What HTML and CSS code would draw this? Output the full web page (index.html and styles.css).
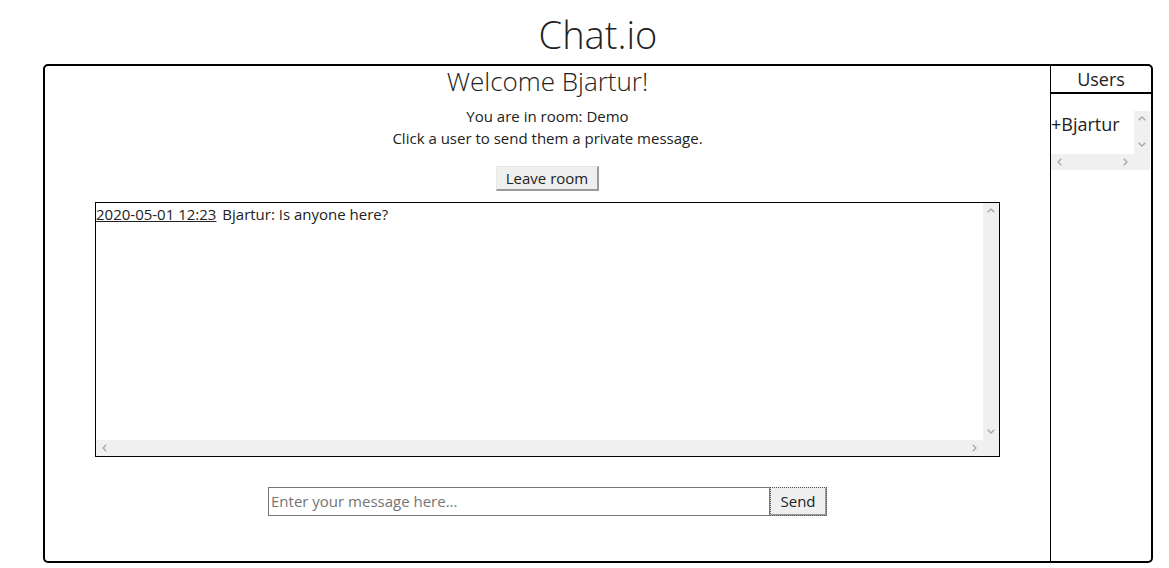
FILE: index.html
```html
<!DOCTYPE html>
<html>
<head>
<meta charset="utf-8">
<link rel="stylesheet" href="styles.css">
</head>
<body>
<div class="wrap">
  <h1 class="title">Chat.io</h1>
  <div class="frame">
    <main class="main">
      <h2 class="welcome">Welcome Bjartur!</h2>
      <p class="info">You are in room: Demo<br>Click a user to send them a private message.</p>
      <button class="leave">Leave room</button>
      <div class="panel messages">
        <div class="panel-body">
          <div class="msg"><a href="#" class="time">2020-05-01 12:23</a> Bjartur: Is anyone here?</div>
        </div>
        <div class="vbar">
          <svg class="arr" width="8" height="5" viewBox="0 0 8 5"><path d="M0.7 4.3 L4 1 L7.3 4.3" fill="none" stroke="#a6a6a6" stroke-width="1.3"/></svg>
          <svg class="arr" width="8" height="5" viewBox="0 0 8 5"><path d="M0.7 0.7 L4 4 L7.3 0.7" fill="none" stroke="#a6a6a6" stroke-width="1.3"/></svg>
        </div>
        <div class="hbar">
          <svg class="arr" width="5" height="8" viewBox="0 0 5 8"><path d="M4.3 0.7 L1 4 L4.3 7.3" fill="none" stroke="#a6a6a6" stroke-width="1.3"/></svg>
          <svg class="arr" width="5" height="8" viewBox="0 0 5 8"><path d="M0.7 0.7 L4 4 L0.7 7.3" fill="none" stroke="#a6a6a6" stroke-width="1.3"/></svg>
        </div>
        <div class="corner"></div>
      </div>
      <form class="composer">
        <input class="input" type="text" placeholder="Enter your message here...">
        <button class="send" type="button">Send</button>
      </form>
    </main>
    <aside class="users">
      <div class="users-head">Users</div>
      <div class="panel user-list">
        <div class="panel-body">
          <div class="user">+Bjartur</div>
        </div>
        <div class="vbar">
          <svg class="arr" width="8" height="5" viewBox="0 0 8 5"><path d="M0.7 4.3 L4 1 L7.3 4.3" fill="none" stroke="#a6a6a6" stroke-width="1.3"/></svg>
          <svg class="arr" width="8" height="5" viewBox="0 0 8 5"><path d="M0.7 0.7 L4 4 L7.3 0.7" fill="none" stroke="#a6a6a6" stroke-width="1.3"/></svg>
        </div>
        <div class="hbar">
          <svg class="arr" width="5" height="8" viewBox="0 0 5 8"><path d="M4.3 0.7 L1 4 L4.3 7.3" fill="none" stroke="#a6a6a6" stroke-width="1.3"/></svg>
          <svg class="arr" width="5" height="8" viewBox="0 0 5 8"><path d="M0.7 0.7 L4 4 L0.7 7.3" fill="none" stroke="#a6a6a6" stroke-width="1.3"/></svg>
        </div>
        <div class="corner"></div>
      </div>
    </aside>
  </div>
</div>
</body>
</html>
```
FILE: styles.css
```css
html, body {
  margin: 0;
  padding: 0;
  background: #fff;
}
body {
  font-family: "Open Sans", "Liberation Sans", sans-serif;
  color: #222;
}
.wrap {
  width: 1110px;
  margin-left: 43px;
  padding-top: 8px;
}
.title {
  margin: 0;
  text-align: center;
  font-weight: 300;
  font-size: 38px;
  line-height: 52px;
  height: 56px;
}
.frame {
  display: flex;
  height: 499px;
  box-sizing: border-box;
  border: 2px solid #000;
  border-radius: 5px;
}
.main {
  flex: 1;
  display: flex;
  flex-direction: column;
  align-items: center;
  border-right: 1px solid #000;
}
.welcome {
  margin: -1px 0 0;
  font-weight: 300;
  font-size: 26px;
  line-height: 32px;
}
.info {
  margin: 8px 0 0;
  font-size: 15px;
  line-height: 22px;
  text-align: center;
}
.leave {
  margin-top: 17px;
  font-family: inherit;
  font-size: 15px;
  color: #222;
  background: #efefef;
  border-style: solid;
  border-width: 1px 2px 2px 1px;
  border-color: #e6e6e6 #9a9a9a #9a9a9a #e6e6e6;
  padding: 0 9px;
  height: 25px;
  line-height: 21px;
}

/* scroll panels with classic scrollbars */
.panel {
  display: grid;
  grid-template-columns: 1fr 16px;
  grid-template-rows: 1fr 16px;
  box-sizing: border-box;
}
.panel-body {
  overflow: hidden;
}
.vbar {
  background: #f0f0f0;
  display: flex;
  flex-direction: column;
  justify-content: space-between;
  align-items: center;
  padding: 5px 0 7px;
}
.hbar {
  background: #f0f0f0;
  display: flex;
  justify-content: space-between;
  align-items: center;
  padding: 0 6px;
}
.corner {
  background: #f0f0f0;
}
.arr {
  display: block;
}

.messages {
  margin-top: 11px;
  width: 905px;
  height: 255px;
  border: 1px solid #000;
  font-size: 15px;
  line-height: 22px;
}
.messages .vbar {
  padding: 5px 0 6px;
}
.msg {
  white-space: nowrap;
}
.time {
  color: #222;
  text-decoration: underline;
  margin-right: 2px;
}
.composer {
  margin: 30px 0 0;
  display: flex;
}
.input {
  width: 502px;
  height: 29px;
  box-sizing: border-box;
  border: 1px solid #767676;
  font-family: inherit;
  font-size: 15px;
  padding: 0 2px 1px;
  color: #222;
}
.input::placeholder {
  color: #757575;
}
.send {
  height: 29px;
  width: 57px;
  box-sizing: border-box;
  font-family: inherit;
  font-size: 15px;
  color: #222;
  background: #efefef;
  border-style: solid;
  border-width: 1px 2px 2px 1px;
  border-color: #e6e6e6 #9a9a9a #9a9a9a #e6e6e6;
  outline: 1px dotted #555;
  outline-offset: -1px;
  padding: 0;
}
.users {
  width: 100px;
  display: flex;
  flex-direction: column;
}
.users-head {
  font-size: 18px;
  line-height: 26px;
  text-align: center;
  border-bottom: 2px solid #000;
}
.user-list {
  margin-top: 17px;
  width: 99px;
  height: 59px;
}
.user {
  font-size: 18px;
  line-height: 26px;
  cursor: pointer;
}
```
